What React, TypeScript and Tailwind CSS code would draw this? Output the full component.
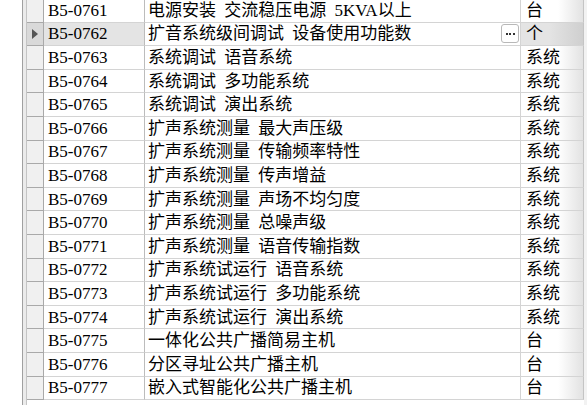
import React from "react";

type Row = { code: string; name: string; unit: string };

const rows: Row[] = [
  { code: "B5-0761", name: "电源安装 交流稳压电源 5KVA以上", unit: "台" },
  { code: "B5-0762", name: "扩音系统级间调试 设备使用功能数", unit: "个" },
  { code: "B5-0763", name: "系统调试 语音系统", unit: "系统" },
  { code: "B5-0764", name: "系统调试 多功能系统", unit: "系统" },
  { code: "B5-0765", name: "系统调试 演出系统", unit: "系统" },
  { code: "B5-0766", name: "扩声系统测量 最大声压级", unit: "系统" },
  { code: "B5-0767", name: "扩声系统测量 传输频率特性", unit: "系统" },
  { code: "B5-0768", name: "扩声系统测量 传声增益", unit: "系统" },
  { code: "B5-0769", name: "扩声系统测量 声场不均匀度", unit: "系统" },
  { code: "B5-0770", name: "扩声系统测量 总噪声级", unit: "系统" },
  { code: "B5-0771", name: "扩声系统测量 语音传输指数", unit: "系统" },
  { code: "B5-0772", name: "扩声系统试运行 语音系统", unit: "系统" },
  { code: "B5-0773", name: "扩声系统试运行 多功能系统", unit: "系统" },
  { code: "B5-0774", name: "扩声系统试运行 演出系统", unit: "系统" },
  { code: "B5-0775", name: "一体化公共广播简易主机", unit: "台" },
  { code: "B5-0776", name: "分区寻址公共广播主机", unit: "台" },
  { code: "B5-0777", name: "嵌入式智能化公共广播主机", unit: "台" },
];

const SELECTED = "B5-0762";

function GridRow({ row }: { row: Row }) {
  const sel = row.code === SELECTED;
  return (
    <div className="flex h-[23.6px] flex-shrink-0">
      {/* row indicator */}
      <div
        className={`w-[17px] flex-shrink-0 flex items-center justify-center border-r border-b border-[#a9a9a9] ${
          sel ? "bg-[#d9d9d9]" : "bg-[#f0f0f0]"
        }`}
      >
        {sel && (
          <svg width="6" height="10" viewBox="0 0 6 10">
            <path d="M0 0 L6 5 L0 10 Z" fill="#555" />
          </svg>
        )}
      </div>
      <div
        className={`w-[101px] flex-shrink-0 flex items-center pl-[4px] border-r border-b border-r-[#bcbcbc] border-b-[#d4d4d4] ${
          sel ? "bg-[#e4e4e4]" : "bg-white"
        }`}
      >
        {row.code}
      </div>
      <div className="w-[376px] flex-shrink-0 flex items-center pl-[3px] pr-[1px] border-r border-b border-r-[#d4d4d4] border-b-[#d4d4d4] bg-white [word-spacing:4px]">
        <span className="flex-1 whitespace-nowrap">{row.name}</span>
        {sel && (
          <div className="w-[18px] h-[19px] rounded-[3px] border border-[#b8b8b8] bg-white flex items-center justify-center gap-[1.5px]">
            <span className="w-[2px] h-[2px] bg-[#333]" />
            <span className="w-[2px] h-[2px] bg-[#333]" />
            <span className="w-[2px] h-[2px] bg-[#333]" />
          </div>
        )}
      </div>
      <div
        className={`w-[63px] flex-shrink-0 flex items-center pl-[5px] border-r border-b border-r-[#c4c4c4] border-b-[#d4d4d4] ${
          sel
            ? "bg-[linear-gradient(to_right,#e4e4e4_45%,#cfcfcf)]"
            : "bg-[linear-gradient(to_right,#ffffff_60%,#e2e2e2)]"
        }`}
      >
        {row.unit}
      </div>
    </div>
  );
}

export default function App() {
  return (
    <div
      className="flex w-[587px] h-[405px] overflow-hidden bg-white text-[17px] leading-none text-black"
      style={{ fontFamily: "'Liberation Serif', 'Noto Sans CJK SC', serif" }}
    >
      <div className="w-[22px] flex-shrink-0 bg-white" />
      <div className="w-[5px] flex-shrink-0 border-l border-r border-l-[#a0a0a0] border-r-[#c4c4c4] bg-[#ebebeb]" />
      <div className="flex flex-col flex-shrink-0 -mt-[1px]">
        {rows.map((r) => (
          <GridRow key={r.code} row={r} />
        ))}
      </div>
      <div className="flex-1 bg-[#f2f2f2]" />
    </div>
  );
}
